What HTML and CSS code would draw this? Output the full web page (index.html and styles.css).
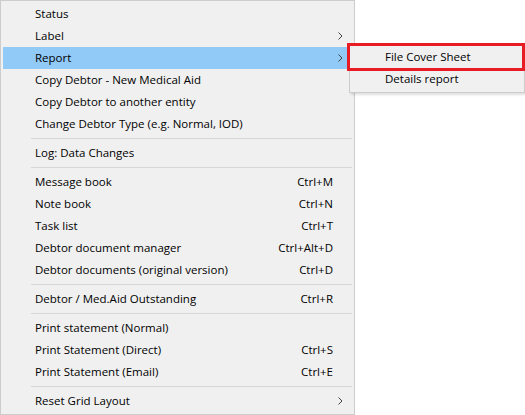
FILE: index.html
```html
<!DOCTYPE html>
<html>
<head>
<meta charset="utf-8">
<link rel="stylesheet" href="styles.css">
</head>
<body>
<div class="stage">
  <div class="menu">
    <div class="item"><span class="label">Status</span></div>
    <div class="item"><span class="label">Label</span><span class="key"></span><span class="arrow"><svg width="5" height="8" viewBox="0 0 5 8"><path d="M0.5 0.5 L4 4 L0.5 7.5" fill="none" stroke="#444" stroke-width="1"/></svg></span></div>
    <div class="item active"><span class="label">Report</span><span class="key"></span><span class="arrow"><svg width="5" height="8" viewBox="0 0 5 8"><path d="M0.5 0.5 L4 4 L0.5 7.5" fill="none" stroke="#444" stroke-width="1"/></svg></span></div>
    <div class="item"><span class="label">Copy Debtor - New Medical Aid</span></div>
    <div class="item"><span class="label">Copy Debtor to another entity</span></div>
    <div class="item"><span class="label">Change Debtor Type (e.g. Normal, IOD)</span></div>
    <div class="sep"></div>
    <div class="item"><span class="label">Log: Data Changes</span></div>
    <div class="sep"></div>
    <div class="item"><span class="label">Message book</span><span class="key">Ctrl+M</span></div>
    <div class="item"><span class="label">Note book</span><span class="key">Ctrl+N</span></div>
    <div class="item"><span class="label">Task list</span><span class="key">Ctrl+T</span></div>
    <div class="item"><span class="label">Debtor document manager</span><span class="key">Ctrl+Alt+D</span></div>
    <div class="item"><span class="label">Debtor documents (original version)</span><span class="key">Ctrl+D</span></div>
    <div class="sep"></div>
    <div class="item"><span class="label">Debtor / Med.Aid Outstanding</span><span class="key">Ctrl+R</span></div>
    <div class="sep"></div>
    <div class="item"><span class="label">Print statement (Normal)</span></div>
    <div class="item"><span class="label">Print Statement (Direct)</span><span class="key">Ctrl+S</span></div>
    <div class="item"><span class="label">Print Statement (Email)</span><span class="key">Ctrl+E</span></div>
    <div class="sep"></div>
    <div class="item"><span class="label">Reset Grid Layout</span><span class="key"></span><span class="arrow"><svg width="5" height="8" viewBox="0 0 5 8"><path d="M0.5 0.5 L4 4 L0.5 7.5" fill="none" stroke="#444" stroke-width="1"/></svg></span></div>
  </div>
  <div class="submenu">
    <div class="subitem">File Cover Sheet</div>
    <div class="subitem">Details report</div>
  </div>
  <div class="callout"></div>
</div>
</body>
</html>
```
FILE: styles.css
```css
html, body {
  margin: 0;
  padding: 0;
  background: #ffffff;
}
body {
  font-family: "Open Sans", "Noto Sans", "Liberation Sans", sans-serif;
  font-size: 11.5px;
  color: #000;
}
.stage {
  position: relative;
  width: 525px;
  height: 415px;
  overflow: hidden;
}
.menu {
  width: 349px;
  border: 1px solid #cccccc;
  background: #f0f0f0;
  padding: 2px;
}
.item {
  height: 22px;
  box-sizing: border-box;
  display: grid;
  grid-template-columns: 1fr auto 19px;
  align-items: center;
  padding-left: 32px;
  padding-bottom: 2px;
  white-space: nowrap;
}
.item.active {
  background: #91c9f7;
}
.key {
  text-align: right;
}
.arrow {
  display: flex;
  align-items: center;
  justify-content: flex-end;
  padding-right: 9px;
  padding-top: 1px;
}
.arrow svg {
  display: block;
}
.sep {
  height: 7px;
  display: flex;
  align-items: center;
  padding-left: 28px;
}
.sep::after {
  content: "";
  display: block;
  height: 1px;
  width: 100%;
  background: #d7d7d7;
}
.submenu {
  position: absolute;
  left: 349px;
  top: 43px;
  width: 170px;
  border: 1px solid #cccccc;
  background: #f0f0f0;
  padding: 2px;
  box-shadow: 2px 2px 2px rgba(0, 0, 0, 0.12);
}
.subitem {
  height: 22px;
  line-height: 22px;
  padding-left: 33px;
  white-space: nowrap;
}
.callout {
  position: absolute;
  left: 347px;
  top: 43px;
  width: 172px;
  height: 22px;
  border: 3px solid #e81c24;
}
```
